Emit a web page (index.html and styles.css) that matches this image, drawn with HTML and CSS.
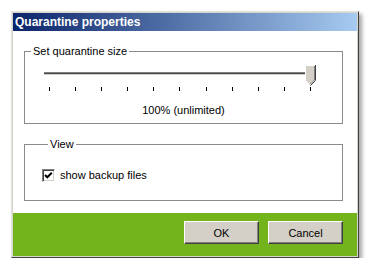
FILE: index.html
```html
<!DOCTYPE html>
<html>
<head>
<meta charset="utf-8">
<link rel="stylesheet" href="styles.css">
</head>
<body>
<div class="window">
  <div class="frame">
    <div class="titlebar">Quarantine properties</div>
    <div class="content">
      <fieldset class="group group-size">
        <legend>Set quarantine size</legend>
        <div class="slider">
          <div class="track"></div>
          <svg class="thumb" width="11" height="21" viewBox="0 0 11 21">
            <polygon points="0.5,0.5 9.5,0.5 9.5,15 5,19.5 0.5,15" fill="#d4d0c8"/>
            <polyline points="0.5,15 0.5,0.5 9.5,0.5" fill="none" stroke="#ffffff" stroke-width="1"/>
            <polyline points="9.5,1 9.5,15 5,19.5" fill="none" stroke="#808080" stroke-width="1"/>
            <polyline points="10.5,0 10.5,15.5 5.5,20.5" fill="none" stroke="#404040" stroke-width="1"/>
          </svg>
        </div>
        <div class="ticks">
          <span></span><span></span><span></span><span></span><span></span><span></span><span></span><span></span><span></span><span></span><span></span>
        </div>
        <div class="value">100% (unlimited)</div>
      </fieldset>
      <fieldset class="group group-view">
        <legend>View</legend>
        <label class="check-row">
          <span class="checkbox">
            <svg width="11" height="11" viewBox="0 0 11 11">
              <polyline points="2,5 4.3,7.3 8.8,2.8" fill="none" stroke="#000" stroke-width="2"/>
            </svg>
          </span>
          <span class="check-label">show backup files</span>
        </label>
      </fieldset>
    </div>
    <div class="footer">
      <button class="btn">OK</button>
      <button class="btn">Cancel</button>
    </div>
  </div>
</div>
</body>
</html>
```

FILE: styles.css
```css
html, body {
  margin: 0;
  padding: 0;
  background: #ffffff;
}
body {
  padding: 11px 0 0 11px;
  font-family: "Liberation Sans", Arial, sans-serif;
  font-size: 11px;
  color: #000;
}
.window {
  width: 346px;
  border: 1px solid;
  border-color: #e4e2dc #404040 #404040 #e4e2dc;
  box-shadow: 3px 3px 4px rgba(0, 0, 0, 0.35);
}
.frame {
  border: 1px solid #d8d5cd;
  display: flex;
  flex-direction: column;
}
.titlebar {
  height: 18px;
  line-height: 18px;
  padding-left: 2px;
  background: linear-gradient(to right, #0a246a, #a6caf0);
  color: #ffffff;
  font-weight: bold;
  font-size: 12px;
}
.content {
  height: 182px;
  box-sizing: border-box;
  padding: 14px 14px 0 11px;
  background: #ffffff;
}
.group {
  margin: 0;
  border: 1px solid #8a8a8a;
  padding: 0;
  min-width: 0;
}
.group legend {
  margin-left: 6px;
  padding: 0 2px;
  line-height: 13px;
  font-size: 11px;
}
.group-size {
  padding-bottom: 6px;
}
.slider {
  position: relative;
  margin: 7px 0 0 19px;
  width: 272px;
  height: 20px;
}
.track {
  position: absolute;
  left: 0;
  right: 2px;
  top: 7px;
  height: 0;
  border-top: 1px solid #808080;
  border-bottom: 1px solid #4a4a4a;
  box-shadow: 0 1px 0 #d4d0c8;
}
.thumb {
  position: absolute;
  right: 0;
  top: 0;
  display: block;
}
.ticks {
  display: flex;
  justify-content: space-between;
  margin: 2px 0 0 24px;
  width: 262px;
  height: 4px;
}
.ticks span {
  width: 1px;
  height: 4px;
  background: #000;
}
.value {
  margin-top: 13px;
  text-align: center;
  line-height: 13px;
}
.group-view {
  margin-top: 14px;
  padding: 18px 0 18px 17px;
}
.check-row {
  display: flex;
  align-items: center;
  height: 13px;
  gap: 5px;
}
.checkbox {
  width: 11px;
  height: 11px;
  border: 1px solid;
  border-color: #808080 #ffffff #ffffff #808080;
  box-shadow: inset 1px 1px 0 #404040, inset -1px -1px 0 #d4d0c8;
  background: #ffffff;
  display: flex;
  align-items: center;
  justify-content: center;
}
.checkbox svg {
  display: block;
}
.check-label {
  line-height: 13px;
}
.footer {
  height: 43px;
  box-sizing: border-box;
  background: #73b31b;
  display: flex;
  justify-content: flex-end;
  align-items: flex-start;
  gap: 9px;
  padding: 8px 14px 0 0;
}
.btn {
  width: 75px;
  height: 23px;
  margin: 0;
  padding: 0;
  font-family: "Liberation Sans", Arial, sans-serif;
  font-size: 11px;
  color: #000;
  background: #d4d0c8;
  border: 1px solid;
  border-color: #ffffff #404040 #404040 #ffffff;
  box-shadow: inset -1px -1px 0 #808080;
}
```
